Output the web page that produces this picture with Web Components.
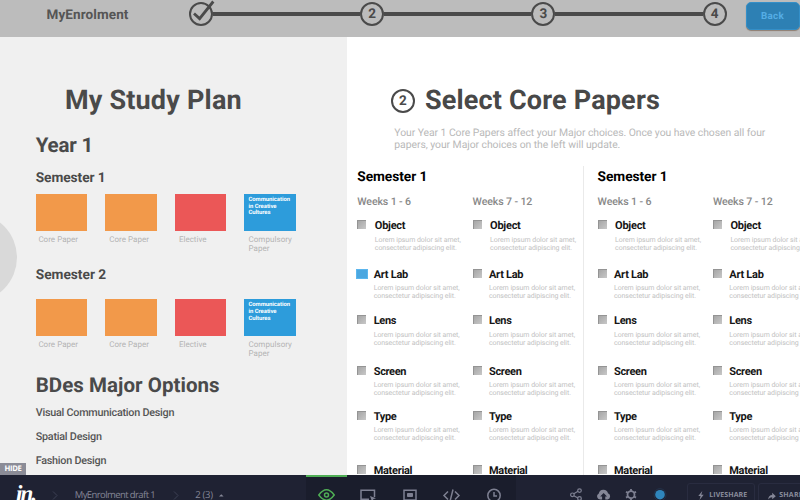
<!DOCTYPE html>
<html lang="en">
<head>
<meta charset="utf-8">
<title>MyEnrolment</title>
<style>
html,body{margin:0;height:100%;overflow:hidden;background:#fff}
body{font-family:Roboto,"Liberation Sans",sans-serif;color:#4a4a4a;text-rendering:geometricPrecision}
</style>
</head>
<body>
<enrol-app></enrol-app>
<script>
const define = (name, html, setup) => {
  const tpl = document.createElement('template');
  tpl.innerHTML = html;
  customElements.define(name, class extends HTMLElement {
    connectedCallback() {
      if (this.shadowRoot) return;
      const root = this.attachShadow({mode: 'open'});
      root.append(tpl.content.cloneNode(true));
      if (setup) setup(this, root);
    }
  });
};

/* One line of text; "w" is its measure in px and is reached by tracking. */
customElements.define('ui-text', class extends HTMLElement {
  connectedCallback() {
    if (this.shadowRoot) return;
    const root = this.attachShadow({mode: 'open'});
    const label = this.getAttribute('label');
    root.innerHTML = `<style>:host{display:block;white-space:nowrap;flex:none}
      span{display:inline-block;vertical-align:top}</style><span></span>`;
    const s = root.querySelector('span');
    s.textContent = label;
    const w = parseFloat(this.getAttribute('w'));
    if (w) {
      const now = s.getBoundingClientRect().width;
      if (now) s.style.letterSpacing = ((w - now) / label.length).toFixed(3) + 'px';
    }
  }
});

define('step-dot', `<style>
:host{display:flex;flex:none;width:24px;height:24px;position:relative}
.c{box-sizing:border-box;width:24px;height:24px;border:2px solid #4a4a4a;border-radius:50%;display:flex;align-items:center;justify-content:center;font:700 13.5px/20px Roboto,sans-serif;color:#4a4a4a}
svg{position:absolute;left:0;top:-3px;overflow:visible}
</style><div class="c"></div>`, (el, root) => {
  const n = el.getAttribute('n');
  if (n) root.querySelector('.c').textContent = n;
  else root.querySelector('.c').insertAdjacentHTML('afterend',
    '<svg width="26" height="26"><path d="M5 14.5 L10.6 19.6 L24.3 2.5" fill="none" stroke="#4a4a4a" stroke-width="2.8"/></svg>');
});

define('app-header', `<style>
:host{display:flex;height:37.5px;background:#bcbcbc;border-bottom:1px solid #d2d2d0;box-sizing:border-box;align-items:flex-start}
.t{font:700 13.5px/18px Roboto;color:#555;margin:6px 0 0 46.5px;width:142.2px}
.steps{display:flex;align-items:center;width:538px;margin-top:2.4px;flex:none}
i{flex:1;height:4px;background:#4a4a4a}
.b{margin:2px 0 0 19.5px;width:55px;height:28px;box-sizing:border-box;border-radius:5px;background:#2d80b4;border:1px solid #348fc8;box-shadow:0 1px 1px #8d7d70;padding:8px 0 0 13.7px;font:700 9.8px/12px Roboto;color:#55ade5}
</style>
<ui-text class="t" label="MyEnrolment" w="82"></ui-text>
<div class="steps"><step-dot></step-dot><i></i><step-dot n="2"></step-dot><i></i><step-dot n="3"></step-dot><i></i><step-dot n="4"></step-dot></div>
<div class="b"><ui-text label="Back" w="23.3"></ui-text></div>`);

define('paper-tile', `<style>
:host{display:block;width:51.3px;flex:none}
.box{height:37px;box-sizing:border-box;padding:3.3px 0 0 4px;background:var(--c);font:700 5.9px/6.8px Roboto;color:#fff}
.cap{padding:4px 0 0 var(--in,4px);height:18px;font:400 8px/9px Roboto;color:#b4b4b4}
</style><div class="box"><slot></slot></div><div class="cap"><slot name="cap"></slot></div>`);

define('semester-tiles', `<style>
:host{display:flex;gap:18.3px;height:59px}
</style>
<paper-tile style="--c:#f2994a;--in:2.7px"><ui-text slot="cap" label="Core Paper" w="39.7"></ui-text></paper-tile>
<paper-tile style="--c:#f2994a"><ui-text slot="cap" label="Core Paper" w="39.7"></ui-text></paper-tile>
<paper-tile style="--c:#eb5757"><ui-text slot="cap" label="Elective" w="27.7"></ui-text></paper-tile>
<paper-tile style="--c:#2d9cdb"><ui-text label="Communication" w="41.5"></ui-text><ui-text label="in Creative" w="28"></ui-text><ui-text label="Cultures" w="22"></ui-text>
<ui-text slot="cap" label="Compulsory" w="43.5"></ui-text><ui-text slot="cap" label="Paper" w="21"></ui-text></paper-tile>`);

define('study-plan', `<style>
:host{display:block;width:347.3px;box-sizing:border-box;padding:47px 0 0 35.7px;background:#f0f0f0;flex:none;position:relative;overflow:hidden}
.h1{font:700 27px/32px Roboto;margin-left:29.2px}
.h2{font:700 20.5px/24px Roboto}
.h3{font:700 13.7px/16px Roboto}
.m{font:500 10.8px/24px Roboto;color:#555}
.knob{position:absolute;left:-72px;top:175.5px;width:89px;height:89px;border-radius:50%;background:#d9d9d9}
.hide{position:absolute;left:0;bottom:0;width:21.5px;height:12px;padding-left:4.5px;background:#8b8c97;color:#fff;font:700 7.7px/13px "Open Sans",sans-serif}
</style>
<div class="knob"></div>
<ui-text class="h1" label="My Study Plan" w="177"></ui-text>
<ui-text class="h2" style="margin-top:18px" label="Year 1" w="57.5"></ui-text>
<ui-text class="h3" style="margin:12px 0 7.5px" label="Semester 1" w="70"></ui-text>
<semester-tiles></semester-tiles>
<ui-text class="h3" style="margin:14.5px 0 15.8px" label="Semester 2" w="70.5"></ui-text>
<semester-tiles></semester-tiles>
<ui-text class="h2" style="margin:16.2px 0 3.3px" label="BDes Major Options" w="184"></ui-text>
<ui-text class="m" label="Visual Communication Design" w="138.5"></ui-text>
<ui-text class="m" label="Spatial Design" w="66"></ui-text>
<ui-text class="m" label="Fashion Design" w="70.5"></ui-text>
<div class="hide"><ui-text label="HIDE" w="17"></ui-text></div>`);

define('paper-option', `<style>
:host{display:flex;height:var(--h);position:relative}
b{width:9px;height:9px;margin:0;box-sizing:border-box;background:linear-gradient(135deg,#a6a6a6,#c8c8c8);border:solid #949494;border-width:1.5px 0 0 1.5px;flex:none}
:host([on]) b{width:12px;height:10px;margin:0 -1.5px 0 -1.5px;background:#4ba7e0;border:1px solid #5bb6ee}
.d{margin-left:var(--g,7.4px)}
.n{font:700 11px/12px Roboto;color:#161616}
.l{font:400 7px/8px Roboto;color:#c2c2c2}
</style><b></b><div class="d"></div>`, (el, root) => {
  const d = root.querySelector('.d'), last = el.hasAttribute('last');
  d.innerHTML = `<ui-text class="n" label="${el.getAttribute('name')}" w="${el.getAttribute('w')}"></ui-text>` +
   (last ? '' : `<div style="height:var(--s,3.3px)"></div><ui-text class="l" label="Lorem ipsum dolor sit amet," w="86"></ui-text><ui-text class="l" label="consectetur adipiscing elit." w="82"></ui-text>`);
});

define('week-column', `<style>
:host{display:block;width:115.3px;flex:none}
.w{font:500 10.6px/14px Roboto;color:#888;margin:10.3px 0 11px}
</style><ui-text class="w"></ui-text><div class="o"></div>`, (el, root) => {
  const old = root.querySelector('.w'), t = document.createElement('ui-text');
  t.className = 'w';
  t.setAttribute('label', el.getAttribute('label'));
  t.setAttribute('w', el.getAttribute('w'));
  old.replaceWith(t);
  const rows = [['Object',30.5,48.7,8.5,4],['Art Lab',34.3,46.6],['Lens',22.5,50.4],['Screen',32.5,45],['Type',22.7,54.3],['Material',38.5,10]];
  root.querySelector('.o').innerHTML = rows.map(([n,w,h,g,s],i) =>
    `<paper-option name="${n}" w="${w}" style="--h:${h}px;${g?`--g:${g}px;--s:${s}px`:''}" ${i==5?'last':''} ${i==1&&el.hasAttribute('picked')?'on':''}></paper-option>`).join('');
});

define('semester-group', `<style>
:host{display:block;flex:none;width:226px;padding:2.6px 0 0 var(--pl,10px)}
.h{font:700 13.7px/16px Roboto;color:#000}
.c{display:flex}
</style><ui-text class="h" label="Semester 1" w="70"></ui-text>
<div class="c"><slot></slot></div>`);

define('core-papers', `<style>
:host{display:block;flex:1;min-width:0;background:#fff;padding-top:47px;overflow:hidden}
.t{display:flex;align-items:center;padding-left:43.6px;height:32px}
.h{font:700 27px/32px Roboto;margin-left:10.1px;color:#484848}
.p{padding:11.2px 0 0 47px;font:400 10.4px/12px Roboto;color:#b8b8b8;height:24px}
.g{display:flex;margin-top:15px;height:309px}
.g semester-group+semester-group{border-left:1px solid #eaeaea;--pl:13.3px}
.t step-dot{transform:translateY(1px)}
</style>
<div class="t"><step-dot n="2"></step-dot><ui-text class="h" label="Select Core Papers" w="235"></ui-text></div>
<div class="p"><ui-text label="Your Year 1 Core Papers affect your Major choices. Once you have chosen all four" w="371"></ui-text><ui-text label="papers, your Major choices on the left will update." w="226"></ui-text></div>
<div class="g">
<semester-group><week-column picked label="Weeks 1 - 6" w="53.7"></week-column><week-column label="Weeks 7 - 12" w="59.7"></week-column></semester-group>
<semester-group><week-column label="Weeks 1 - 6" w="53.7"></week-column><week-column label="Weeks 7 - 12" w="59.7"></week-column></semester-group>
</div>`);

define('preview-bar', `<style>
:host{display:flex;height:25px;background:#1f2233;overflow:hidden;color:#858797;font:400 9.5px/12px "Open Sans",sans-serif}
svg{display:block;fill:none;stroke:#7e8092;stroke-width:1.5;overflow:visible;flex:none}
.l{display:flex;width:305.5px;flex:none;padding-top:14px;box-sizing:border-box}
.logo{font:italic 700 23px/24px "Liberation Serif",serif;color:#fff;margin:-7px 0 0 16px;width:36px}
.ch{margin-top:2px;stroke:#3d4054;stroke-width:1}
.m{display:flex;width:210px;flex:none;background:#1a1d2c}
.tab{width:41.8px;height:25px;box-sizing:border-box;border-top:2px solid transparent;display:flex;justify-content:center;padding-top:12px}
.tab.on{border-color:#4fae55}
.tab.on svg{stroke:#4fae55}
.r{display:flex;padding:13.3px 0 0 54px}
.btn{display:flex;box-sizing:border-box;height:30px;margin-top:-5px;border:1px solid #292c40;border-radius:3px;padding:5.5px 0 0 9px;font:700 7px/12px "Open Sans",sans-serif;color:#8a8c9b;flex:none}
.f{fill:#858797;stroke:none}
</style>
<div class="l"><ui-text class="logo" label="in." w="19"></ui-text>
<svg class="ch" width="6" height="9"><path d="M1 0.5 L5 4.5 L1 8.5"/></svg>
<ui-text style="margin-left:16.7px;width:98px" label="MyEnrolment draft 1" w="80.5"></ui-text>
<svg class="ch" width="6" height="9"><path d="M1 0.5 L5 4.5 L1 8.5"/></svg>
<ui-text style="margin-left:16.5px;width:24px" label="2 (3)" w="17.5"></ui-text>
<svg width="5" height="12"><path class="f" d="M0 7.4 L2.3 5.2 L4.6 7.4Z"/></svg></div>
<div class="m">
<div class="tab on"><svg width="17" height="12"><path d="M.8 6 Q8.5 -4.4 16.2 6 Q8.5 16.4 .8 6Z"/><circle cx="8.5" cy="6" r="2"/></svg></div>
<div class="tab"><svg width="16" height="12"><path d="M9 10.3H1V1.2H14.5V8"/><path d="M10 7 L16 9.3 L13.3 10.3 L12.2 13Z" fill="#7e8092" stroke="none"/></svg></div>
<div class="tab"><svg width="14" height="12"><path d="M1 1.2H13V11H1Z"/><path d="M4.5 4.5H9.5V7.5H4.5Z" fill="#7e8092" stroke-width="1"/></svg></div>
<div class="tab"><svg width="17" height="12"><path d="M5 2.5 L1 6.5 L5 10.5 M12 2.5 L16 6.5 L12 10.5 M10 .5 L7 12.5"/></svg></div>
<div class="tab"><svg width="14" height="14"><circle cx="7" cy="6.5" r="6.2"/><path d="M7 3V7H10"/></svg></div>
</div>
<div class="r">
<svg width="12" height="13" style="stroke-width:1.2"><path d="M3.8 5.8L8 3.3M3.8 7.8L8 10"/><circle cx="2.4" cy="6.8" r="1.8"/><circle cx="9.5" cy="2.6" r="1.8"/><circle cx="9.5" cy="10.5" r="1.8"/></svg>
<svg width="13" height="12" style="margin-left:15.5px"><path class="f" d="M3.2 11.5A3.1 3.1 0 0 1 1.8 5.6A4.7 4.7 0 0 1 11 5.2A3.3 3.3 0 0 1 10.6 11.5H8.3V8.4H10L6.6 4.9L3.2 8.4H5.1V11.5Z"/></svg>
<svg width="12" height="12" style="margin-left:14.5px;stroke-width:1.8"><circle cx="6" cy="6.7" r="3.5"/><path d="M6 3.2V1M6 10.2V12.4M3 4.9L1 3.8M9 8.5L11 9.6M3 8.5L1 9.6M9 4.9L11 3.8"/></svg>
<svg width="12" height="12" style="margin-left:17px"><circle cx="6" cy="6.7" r="6" stroke="#23334b" stroke-width="1"/><circle cx="6" cy="6.7" r="4.8" fill="#2f86bd" stroke="none"/></svg>
<div class="btn" style="margin-left:21.3px;width:68px"><svg width="6" height="10" style="margin:1.5px 5px 0 1.5px"><path class="f" d="M4.3 0L.3 5H2.6L1.5 9L5.7 3.7H3.3Z"/></svg><ui-text label="LIVESHARE" w="38"></ui-text></div>
<div class="btn" style="margin-left:3.5px;width:68px"><svg width="8" height="8" style="margin:2px 3px 0 0"><path class="f" d="M.2 7.5Q.5 3 4.2 3V.8L7.8 4.2L4.2 7.2V5.2Q1.8 5.1 .2 7.5Z"/></svg><ui-text label="SHARE" w="23.5"></ui-text></div>
</div>`);

define('enrol-app', `<style>
:host{display:flex;flex-direction:column;width:800px;height:500px;overflow:hidden}
.main{display:flex;height:438px;flex:none;margin-top:-.5px}
app-header,preview-bar{flex:none}
</style><app-header></app-header><div class="main"><study-plan></study-plan><core-papers></core-papers></div><preview-bar></preview-bar>`);
</script>
</body>
</html>
